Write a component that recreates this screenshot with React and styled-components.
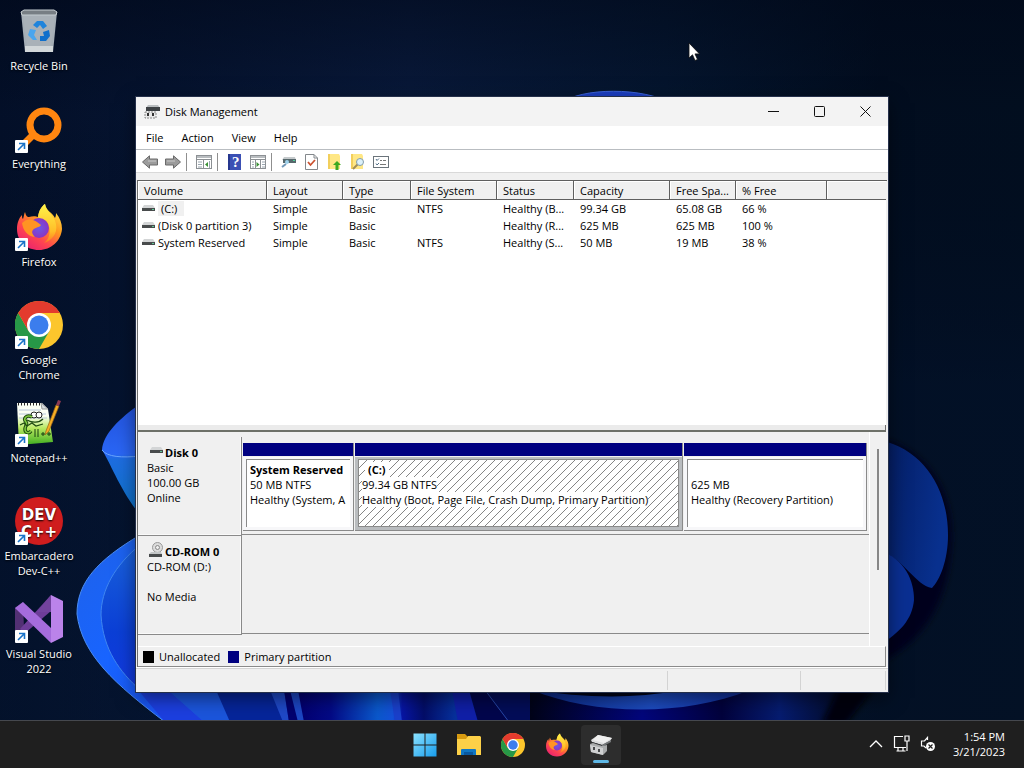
import styled, { createGlobalStyle } from "styled-components";

const GlobalStyle = createGlobalStyle`
    *, *::before, *::after {
        box-sizing: border-box;
    }

    body {
        margin: 0;
        font-family: "Open Sans", "Noto Sans", sans-serif;
        font-size: 11px;
        line-height: 15px;
        color: #000;
        background: #03102a;
    }

    button {
        margin: 0;
        padding: 0;
        border: 0;
        background: transparent;
        font: inherit;
        color: inherit;
    }
`

const Screen = styled.div`
    position: relative;
    display: flex;
    flex-direction: column;
    min-height: 100vh;
    overflow: hidden;
`

const Wallpaper = styled.svg`
    position: absolute;
    inset: 0;
    width: 100%;
    height: 100%;
`

const DesktopArea = styled.main`
    position: relative;
    flex: 1;
`

const Shortcuts = styled.nav`
    display: flex;
    flex-direction: column;
    width: 78px;
`

const Shortcut = styled.button`
    display: flex;
    flex-direction: column;
    align-items: center;
    gap: 3px;
    height: 98px;
    padding-top: 7px;
    color: #fff;
    text-shadow: 0 1px 2px #000;
`

const Pointer = styled.svg`
    position: absolute;
    left: 688px;
    top: 42px;
`

const Window = styled.section`
    position: absolute;
    left: 136px;
    right: 136px;
    top: 97px;
    background: #f0f0f0;
    box-shadow: 0 0 0 1px #25304a, 0 6px 18px rgba(0, 0, 0, 0.5);
`

const TitleBar = styled.header`
    display: flex;
    align-items: center;
    height: 29px;
    padding-left: 8px;
    background: #f3f3f3;
`

const Title = styled.h1`
    flex: 1;
    margin: 0 0 0 5px;
    font-size: 11px;
    font-weight: 400;
`

const CaptionButton = styled.button`
    display: flex;
    align-items: center;
    justify-content: center;
    width: 46px;
    height: 29px;
`

const MenuBar = styled.nav`
    display: flex;
    height: 24px;
    padding-left: 1px;
    background: #fff;
    border-bottom: 1px solid #b9bdc1;
`

const MenuItem = styled.button`
    padding: 0 9px;
`

const Toolbar = styled.div`
    display: flex;
    align-items: center;
    height: 23px;
    margin-bottom: 7px;
    padding: 2px 2px 0;
    background: #fff;
    border-bottom: 1px solid #d9d9d9;
`

const ToolButton = styled.button`
    display: flex;
    align-items: center;
    justify-content: center;
    width: 23px;
    height: 20px;
`

const ToolSeparator = styled.span`
    width: 8px;
    height: 18px;
    border-left: 1px solid #8f8f8f;
    margin-left: 2px;
    margin-right: -2px;
`

const Panes = styled.div`
    margin: 0 1px;
    border-left: 1px solid #6d6d6d;
    border-top: 1px solid #5f5f5f;
`

const VolumeList = styled.div`
    height: 244px;
    margin-right: 1px;
    background: #fff;
    overflow: hidden;
`

const VolumeTable = styled.table`
    width: 100%;
    table-layout: fixed;
    border-collapse: separate;
    border-spacing: 0;
`

const HeadCell = styled.th`
    height: 19px;
    padding: 0 0 0 6px;
    font-weight: 400;
    text-align: left;
    white-space: nowrap;
    overflow: hidden;
    background: #f0f0f0;
    border-bottom: 1px solid #5f5f5f;
    border-right: ${props => props.$last ? "0" : "1px solid #5f5f5f"};
    box-shadow: inset 1px 1px 0 #fff;
`

const Cell = styled.td`
    height: 17px;
    padding: 0 0 0 6px;
    white-space: nowrap;
    overflow: hidden;
`

const VolumeCell = styled(Cell)`
    padding-left: 4px;
`

const VolumeName = styled.span`
    display: flex;
    align-items: center;
    gap: 3px;
`

const VolumeText = styled.span`
    padding: ${props => props.$selected ? "0 7px 0 3px" : "0"};
    background: ${props => props.$selected ? "#f0f0f0" : "transparent"};
`

const Splitter = styled.div`
    height: 7px;
    margin-right: 1px;
    background: #ebebeb;
    border-right: 1px solid #6d6d6d;
    border-bottom: 2px solid #6d7068;
`

const DiskPane = styled.div`
    display: flex;
    min-height: 214px;
`

const DiskRows = styled.div`
    flex: 1;
    min-width: 0;
    padding-top: 5px;
    border-right: 1px solid #fff;
`

const ScrollTrack = styled.div`
    width: 17px;
    padding: 17px 8px 0 7px;
`

const ScrollThumb = styled.div`
    height: 121px;
    background: #868686;
`

const DiskRow = styled.div`
    display: flex;
    height: 99px;
`

const DiskLabel = styled.div`
    width: 104px;
    padding: 8px 0 0 9px;
    border-right: 1px solid #8a8a8a;
    border-bottom: 1px solid #8a8a8a;
    box-shadow: inset -1px -1px 0 #fafafa;
`

const DiskName = styled.div`
    display: flex;
    align-items: center;
    gap: 2px;
    height: 15px;
    font-weight: 700;
`

const DiskSymbol = styled.span`
    display: flex;
    align-items: center;
    justify-content: flex-end;
    width: 16px;
    height: 15px;
    padding-bottom: 3px;
`

const DiskLine = styled.div`
    height: 15px;
`

const Partitions = styled.div`
    display: grid;
    grid-template-columns: 111px 1fr 183px;
    gap: 1px;
    flex: 1;
    min-width: 0;
    margin-bottom: 1px;
    padding: 6px 2px 3px 1px;
    border-bottom: 1px solid #8a8a8a;
`

const Partition = styled.div`
    display: flex;
    flex-direction: column;
    min-width: 0;
    border-right: 1px solid #8a8a8a;
    border-bottom: 1px solid #8a8a8a;
`

const PartitionBar = styled.div`
    height: 13px;
    background: #000080;
    margin-bottom: 1px;
`

const PartitionFrame = styled.div`
    flex: 1;
    display: flex;
    min-width: 0;
    padding: 2px 3px 3px;
    background: ${props => props.$selected ? "#b9bcbf" : "#f7f7f9"};
`

const PartitionBody = styled.div`
    position: relative;
    flex: 1;
    min-width: 0;
    padding: 2px 3px;
    background: #fff;
    border-left: 1px solid #8a8a8a;
    border-top: 1px solid #8a8a8a;
    border-right: ${props => props.$selected ? "1px solid #8a8a8a" : "0"};
    border-bottom: ${props => props.$selected ? "1px solid #8a8a8a" : "0"};
`

const Hatch = styled.svg`
    position: absolute;
    inset: 0;
    width: 100%;
    height: 100%;
`

const PartitionLine = styled.div`
    position: relative;
    height: 15px;
    white-space: nowrap;
    overflow: hidden;
    font-weight: ${props => props.$bold ? 700 : 400};
    padding-left: ${props => props.$indent ? "3px" : "0"};

    span {
        background: #fff;
        padding: ${props => props.$indent ? "0 3px" : "0"};
    }
`

const Legend = styled.footer`
    display: flex;
    align-items: center;
    gap: 8px;
    height: 21px;
    margin-right: 1px;
    padding-left: 5px;
    border-top: 1px solid #fff;
    border-right: 1px solid #8a8a8a;
    border-bottom: 1px solid #8a8a8a;
`

const LegendItem = styled.span`
    display: flex;
    align-items: center;
    gap: 5px;
`

const Swatch = styled.span`
    width: 11px;
    height: 12px;
    background: ${props => props.$color};
`

const StatusBar = styled.div`
    display: flex;
    justify-content: flex-end;
    height: 25px;
    padding: 3px 2px 2px;
    border-top: 1px solid #fff;
    box-shadow: inset 0 1px 0 #d5d5d5;
`

const StatusCell = styled.div`
    width: ${props => props.$width};
    border-left: 1px solid #d3d3d3;
    border-right: ${props => props.$end ? "1px solid #d3d3d3" : "0"};
`

const Taskbar = styled.footer`
    position: relative;
    display: grid;
    grid-template-columns: 1fr auto 1fr;
    align-items: center;
    height: 48px;
    padding-left: 2px;
    background: #1f1f1f;
    border-top: 1px solid #45484e;
    color: #fff;
`

const TaskApps = styled.div`
    grid-column: 2;
    display: flex;
    gap: 4px;
`

const TaskButton = styled.button`
    display: flex;
    align-items: center;
    justify-content: center;
    position: relative;
    width: 40px;
    height: 40px;
    border-radius: 4px;
    background: ${props => props.$active ? "#2d2d2d" : "transparent"};

    &::after {
        content: "";
        position: absolute;
        left: 12px;
        bottom: 2px;
        width: 16px;
        height: 3px;
        border-radius: 2px;
        background: ${props => props.$active ? "#5fb8e6" : "transparent"};
    }
`

const Tray = styled.div`
    display: flex;
    align-items: center;
    justify-content: flex-end;
    gap: 10px;
    padding: 0 19px 2px 0;
`

const TrayButton = styled.button`
    display: flex;
    align-items: center;
`

const Clock = styled.time`
    margin-left: 7px;
    line-height: 15px;
    text-align: right;
`

function WallpaperArt() {
    return (
        <Wallpaper viewBox="0 0 1024 768" preserveAspectRatio="xMidYMid slice" aria-hidden="true">
            <defs>
                <filter id="soft" x="-20%" y="-20%" width="140%" height="140%">
                    <feGaussianBlur stdDeviation="3" />
                </filter>
                <linearGradient id="base" x1="0" x2="1" y1="0" y2="0">
                    <stop offset="0" stopColor="#03102a" />
                    <stop offset="0.4" stopColor="#0a1c40" />
                    <stop offset="0.65" stopColor="#051833" />
                    <stop offset="0.86" stopColor="#020e20" />
                    <stop offset="1" stopColor="#020f20" />
                </linearGradient>
                <linearGradient id="fade" x1="0" x2="0" y1="0" y2="1">
                    <stop offset="0" stopColor="#010818" stopOpacity="0.6" />
                    <stop offset="0.15" stopColor="#010818" stopOpacity="0.1" />
                    <stop offset="0.5" stopColor="#03122c" stopOpacity="0.5" />
                    <stop offset="1" stopColor="#04142c" stopOpacity="0.4" />
                </linearGradient>
                <linearGradient id="leafTop" x1="0" x2="0" y1="0" y2="1">
                    <stop offset="0" stopColor="#2353dd" />
                    <stop offset="0.45" stopColor="#2a66f5" />
                    <stop offset="0.5" stopColor="#1d6de0" />
                    <stop offset="1" stopColor="#0d74c8" />
                </linearGradient>
                <linearGradient id="leafOuter" x1="0" x2="1" y1="0" y2="1">
                    <stop offset="0" stopColor="#1f62e8" />
                    <stop offset="0.4" stopColor="#1864ff" />
                    <stop offset="1" stopColor="#1c3ee0" />
                </linearGradient>
                <linearGradient id="leafInner" x1="0" x2="0" y1="0" y2="1">
                    <stop offset="0" stopColor="#1a62dc" />
                    <stop offset="0.6" stopColor="#0b3fd6" />
                    <stop offset="1" stopColor="#1238e0" />
                </linearGradient>
                <linearGradient id="strip" gradientUnits="userSpaceOnUse" x1="300" x2="455" y1="0" y2="0">
                    <stop offset="0" stopColor="#020070" />
                    <stop offset="0.2" stopColor="#030a86" />
                    <stop offset="0.5" stopColor="#0a58cc" />
                    <stop offset="0.6" stopColor="#1450d8" />
                    <stop offset="0.66" stopColor="#0715a4" />
                    <stop offset="0.8" stopColor="#030d68" />
                    <stop offset="1" stopColor="#06309c" />
                </linearGradient>
                <linearGradient id="rightLeaf" x1="0" x2="1" y1="0" y2="0.3">
                    <stop offset="0" stopColor="#041c60" />
                    <stop offset="1" stopColor="#08308e" />
                </linearGradient>
                <linearGradient id="bowl" gradientUnits="userSpaceOnUse" x1="530" x2="800" y1="0" y2="0">
                    <stop offset="0" stopColor="#0a2680" />
                    <stop offset="0.45" stopColor="#1d4cc0" />
                    <stop offset="1" stopColor="#0a1c80" />
                </linearGradient>
                <linearGradient id="under" gradientUnits="userSpaceOnUse" x1="530" x2="850" y1="0" y2="0">
                    <stop offset="0" stopColor="#010318" />
                    <stop offset="0.35" stopColor="#02067c" />
                    <stop offset="0.6" stopColor="#02023c" />
                    <stop offset="0.78" stopColor="#061c70" />
                    <stop offset="1" stopColor="#02081c" />
                </linearGradient>
            </defs>
            <rect width="1024" height="768" fill="url(#base)" />
            <rect width="1024" height="768" fill="url(#fade)" />
            <path d="M560 104C580 87 645 87 672 104Z" fill="#1c3fc4" stroke="#3a62d8" />
            <path d="M140 404C120 418 103 434 102 450C110 462 120 490 140 515Z" fill="url(#leafTop)" />
            <path d="M102 450C107 457 122 458 140 456" fill="none" stroke="#69a5ff" />
            <path d="M140 535C98 560 77 582 77 614C82 655 115 684 165 722H300V535Z" fill="url(#leafOuter)" stroke="#4a8df5" />
            <path d="M140 545C115 565 101 590 101 615C103 650 120 672 140 690Z" fill="url(#leafInner)" stroke="#3f86f0" />
            <path d="M138 690L165 722H204L168 690Z" fill="#1c3fe0" />
            <path d="M168 690L204 722H232L216 690Z" fill="#1b55dc" />
            <path d="M216 690L230 722H290V690Z" fill="#06259a" />
            <path d="M270 690L283 722H289L284 690Z" fill="#1f49c8" />
            <path d="M284 690L289 722H520V690Z" fill="url(#strip)" />
            <path d="M290 690L298 722H304L298 690Z" fill="#1c46c4" />
            <path d="M390 690L395 722H402L398 690Z" fill="#1a40cc" />
            <path d="M452 690L458 722H478L469 690Z" fill="#101fa8" />
            <path d="M469 690L478 722H560V690Z" fill="#02064c" />
            <path d="M485 690L509 722H610L530 690Z" fill="#030d58" />
            <path d="M485 690L509 722" stroke="#2747a8" fill="none" />
            <path d="M530 690H850L830 722H530Z" fill="url(#under)" />
            <path d="M532 690C590 714 680 718 750 690Z" fill="url(#bowl)" />
            <path d="M532 690C580 697 630 700 680 690Z" fill="#010418" />
            <path d="M840 686L822 724H846L876 686Z" fill="#000208" filter="url(#soft)" />
            <path d="M870 436C935 448 956 500 951 550C946 610 920 645 870 668Z" fill="#01021c" filter="url(#soft)" />
            <path d="M880 440C925 450 948 490 948 535C948 560 940 580 932 588C915 585 905 560 880 550Z" fill="url(#rightLeaf)" />
            <path d="M880 550C905 560 914 580 914 600C912 620 900 632 880 645Z" fill="#0a2f92" />
        </Wallpaper>
    )
}

function ShortcutBadge() {
    return (
        <g>
            <rect x="0" y="35" width="13" height="13" rx="1" fill="#fff" />
            <path d="M3 45L9 39M4 38.500H9.500V44" fill="none" stroke="#1a73c8" strokeWidth="1.600" />
        </g>
    )
}

function RecycleIcon() {
    return (
        <svg width="48" height="48" viewBox="0 0 48 48">
            <path d="M6 5H42L38 45H10Z" fill="#a5aeb6" />
            <path d="M6 5L9 3H39L42 5L41 8H7Z" fill="#777e84" stroke="#c7ced2" />
            <path d="M8 9H40L36 39H12Z" fill="#a9b1b8" />
            <path d="M10 39H38L38 45H10Z" fill="#d2d7d9" />
            <path d="M18 18L22 14H28L32 19L28 22L25 18L22 21Z" fill="#1f84dc" />
            <path d="M15 22L21 23L19 28L22 33H18L13 28Z" fill="#49a5ee" />
            <path d="M34 23L35 29L31 34H25V29H29L28 25Z" fill="#0f6fcb" />
        </svg>
    )
}

function EverythingIcon() {
    return (
        <svg width="48" height="48" viewBox="0 0 48 48">
            <path d="M18 30L5 43" stroke="#ff8610" strokeWidth="7" />
            <circle cx="29" cy="20" r="14" fill="none" stroke="#ff8610" strokeWidth="7" />
            <ShortcutBadge />
        </svg>
    )
}

function FirefoxIcon({ size, badge }) {
    return (
        <svg width={size} height={size} viewBox="0 0 48 48">
            <defs>
                <linearGradient id="foxBody" x1="0.9" x2="0.2" y1="0" y2="1">
                    <stop offset="0" stopColor="#fff24a" />
                    <stop offset="0.4" stopColor="#ff9a1f" />
                    <stop offset="0.7" stopColor="#ff4550" />
                    <stop offset="1" stopColor="#e81f72" />
                </linearGradient>
                <linearGradient id="foxFlame" x1="0" x2="0" y1="0" y2="1">
                    <stop offset="0" stopColor="#fff44a" />
                    <stop offset="0.7" stopColor="#ffbd28" />
                    <stop offset="1" stopColor="#ff7a20" />
                </linearGradient>
                <radialGradient id="foxGlobe">
                    <stop offset="0" stopColor="#6c58e8" />
                    <stop offset="1" stopColor="#8a35c2" />
                </radialGradient>
            </defs>
            <path d="M10 9C11 13 12 14 14 14C17 13 21 13 23 14C24 7 27 3 30 1C31 8 37 9 40 15C41 13 41 11 41 10C45 15 47 20 47 26C46 38 36 47 24 47C11 47 2 38 2 26C2 20 4 15 7 12C7 14 7 15 8 16C9 13 9 11 10 9Z" fill="url(#foxBody)" />
            <path d="M30 1C31 9 39 11 41 21C43 31 36 38 29 40C36 35 36 25 32 19C29 16 24 16 23 14C24 7 27 3 30 1Z" fill="url(#foxFlame)" />
            <circle cx="24" cy="25" r="10" fill="url(#foxGlobe)" />
            <path d="M7 20C12 15 18 16 22 19L26 22C24 25 20 24 18 27C16 29 18 32 20 34C12 33 8 27 7 20Z" fill="#ff9423" />
            {badge && <ShortcutBadge />}
        </svg>
    )
}

function ChromeIcon({ size, badge }) {
    return (
        <svg width={size} height={size} viewBox="0 0 48 48">
            <circle cx="24" cy="24" r="24" fill="#fcc62c" />
            <path d="M3.200 12A24 24 0 0 0 24 48L34.400 30L24 24L13.600 30Z" fill="#279847" />
            <path d="M3.200 12A24 24 0 0 1 44.800 12H24L13.600 30Z" fill="#e33b2e" />
            <circle cx="24" cy="24" r="12" fill="#fff" />
            <circle cx="24" cy="24" r="9.500" fill="#3b7ded" />
            {badge && <ShortcutBadge />}
        </svg>
    )
}

function NotepadIcon() {
    return (
        <svg width="48" height="48" viewBox="0 0 48 48">
            <defs>
                <linearGradient id="notePage" x1="0" x2="0" y1="0" y2="1">
                    <stop offset="0.3" stopColor="#fbfff5" />
                    <stop offset="0.6" stopColor="#b8e860" />
                    <stop offset="1" stopColor="#3fae20" />
                </linearGradient>
            </defs>
            <path d="M2 4H27L33 10L38 43L4 46Z" fill="url(#notePage)" />
            <path d="M26 4L27 10H33Z" fill="#d8dde0" stroke="#999" />
            <path d="M3 5H26" stroke="#222" strokeWidth="3" strokeDasharray="1 2" />
            <path d="M4 11H26M4 15H31M4 19H32" stroke="#b9c8dc" />
            <circle cx="19" cy="16" r="3" fill="#fff" stroke="#222" />
            <circle cx="24" cy="16" r="3" fill="#fff" stroke="#222" />
            <path d="M17 18C11 15 8 20 11 23C13 25 10 27 10 30C10 34 14 35 16 32" fill="none" stroke="#1f4a10" strokeWidth="3.500" />
            <path d="M17 18C11 15 8 20 11 23C13 25 10 27 10 30C10 34 14 35 16 32" fill="none" stroke="#80cc40" strokeWidth="1.500" />
            <path d="M5 26L9 24L12 27L17 24L21 27L28 25M12 21C17 24 24 24 28 20" fill="none" stroke="#1f4a10" strokeWidth="1.300" />
            <path d="M20 30V38M23 30V38M26 35H30M28 33V37M32 35H36M34 33V37" stroke="#164010" />
            <path d="M31 32L41 6L44 7L34 32L30 36Z" fill="#f6ae24" stroke="#96601a" strokeWidth="0.700" />
            <path d="M41 6L43 1L46 2L44 7Z" fill="#8c3a52" />
            <ShortcutBadge />
        </svg>
    )
}

const LogoText = styled.text`
    font-family: "DejaVu Sans", sans-serif;
    font-weight: 700;
    font-size: 15px;
    fill: #fff;
`

function DevIcon() {
    return (
        <svg width="48" height="48" viewBox="0 0 48 48" aria-hidden="true">
            <circle cx="24" cy="24" r="24" fill="#cf1d1e" />
            <LogoText x="24" y="23" textAnchor="middle">DEV</LogoText>
            <LogoText x="24" y="40" textAnchor="middle">C++</LogoText>
            <ShortcutBadge />
        </svg>
    )
}

function VisualStudioIcon() {
    return (
        <svg width="48" height="48" viewBox="0 0 48 48">
            <path d="M0 13L8 7L9 34L0 36Z" fill="#523074" />
            <path d="M5 34L36 0V16L9 39Z" fill="#6d3d98" />
            <path d="M36 0L48 6V42L36 48Z" fill="#bb83ea" />
            <path d="M0 13L8 7L36 33V48Z" fill="#a56cdc" />
            <path d="M36 0V17L22 17Z" fill="#72439e" />
            <ShortcutBadge />
        </svg>
    )
}

function DriveIcon() {
    return (
        <svg width="13" height="8" viewBox="0 0 13 8" aria-hidden="true">
            <path d="M2 0H11L13 3H0Z" fill="#d3d5d6" />
            <rect y="3" width="13" height="3" fill="#484b4c" />
            <rect x="10" y="4" width="2" height="1" fill="#62c796" />
        </svg>
    )
}

function CdIcon() {
    return (
        <svg width="14" height="17" viewBox="0 0 14 17" aria-hidden="true">
            <circle cx="8.500" cy="5.500" r="5" fill="#dcdcdc" stroke="#999" />
            <circle cx="8.500" cy="5.500" r="2" fill="#eee" stroke="#888" />
            <path d="M2 10H12L13 12H0Z" fill="#c3c6c7" />
            <rect y="12" width="13" height="3" fill="#484b4c" />
        </svg>
    )
}

function AppIcon() {
    return (
        <svg width="16" height="16" viewBox="0 0 16 16">
            <path d="M4 1H14L16 4H2Z" fill="#b9bdbf" />
            <rect x="2" y="3" width="14" height="4" fill="#3e4245" />
            <path d="M1 8H12V14H1Z" fill="#e9e9e9" stroke="#888" strokeDasharray="2 1" />
            <path d="M3 9H5V12H3ZM8 9H10V12H8Z" fill="#333" />
        </svg>
    )
}

function ArrowIcon({ flip }) {
    return (
        <svg width="16" height="14" viewBox="0 0 16 14">
            <path d={flip ? "M15.500 7L8.500 0.800V4H0.500V10H8.500V13.200Z" : "M0.500 7L7.500 0.800V4H15.500V10H7.500V13.200Z"} fill="#9c9c9c" stroke="#6a6a6a" />
            <path d={flip ? "M2 6H10" : "M6 6H14"} stroke="#c9c9c9" />
        </svg>
    )
}

function PaneIcon({ right }) {
    return (
        <svg width="16" height="14" viewBox="0 0 16 14">
            <rect x="0.500" y="0.500" width="15" height="13" fill="#fff" stroke="#8c9094" />
            <rect x="1" y="1" width="14" height="2" fill="#b9bdc0" />
            <path d={right ? "M0 4.500H16M5.500 5V14M10.500 5V14" : "M0 4.500H16M7.500 5V14"} stroke="#8c9094" />
            <path d={right ? "M12 7H15M12 9.500H15M12 12H15M2 7H4M2 9.500H4M2 12H4" : "M2 7H6M2 9.500H6M2 12H6M13.500 6V13"} stroke="#9aa6b0" />
            <path d={right ? "M6.500 7V12L9.500 9.500Z" : "M12 7V12L9 9.500Z"} fill="#3a9136" />
        </svg>
    )
}

const HelpText = styled.text`
    font-family: "Liberation Serif", serif;
    font-weight: 700;
    font-size: 15px;
    fill: #fff;
`

function HelpIcon() {
    return (
        <svg width="14" height="16" viewBox="0 0 14 16" aria-hidden="true">
            <rect width="13" height="16" fill="#3b50b4" />
            <rect width="2" height="16" fill="#26378f" />
            <HelpText x="4" y="13">?</HelpText>
        </svg>
    )
}

function DiskSearchIcon() {
    return (
        <svg width="16" height="14" viewBox="0 0 16 14">
            <path d="M3 2H14L15 5H1Z" fill="#c5cacc" />
            <rect x="2" y="4" width="13" height="4" fill="#56686c" />
            <rect x="12" y="5" width="2" height="1" fill="#4fd09a" />
            <circle cx="6" cy="7" r="2" fill="#9fd2ec" />
            <path d="M5 9L1 12" stroke="#7198b8" strokeWidth="2" />
        </svg>
    )
}

function CheckPageIcon() {
    return (
        <svg width="13" height="16" viewBox="0 0 13 16">
            <path d="M0.500 0.500H9L12.500 4V15.500H0.500Z" fill="#fff" stroke="#83888c" />
            <path d="M9 0.500V4H12.500" fill="none" stroke="#83888c" />
            <path d="M3 8L5.500 11L10 6" fill="none" stroke="#cb5230" strokeWidth="1.800" />
        </svg>
    )
}

function FolderToolIcon({ search }) {
    return (
        <svg width="15" height="16" viewBox="0 0 15 16">
            <path d="M1 0H12L13 2V15H1Z" fill="#ffe785" />
            <path d="M1 0H3V15H1Z" fill="#f2cf5c" />
            {search
                ? <g><path d="M8 10L3 15" stroke="#a28d58" strokeWidth="2" /><circle cx="10" cy="8" r="3.500" fill="#dcf1fb" stroke="#849ca9" /></g>
                : <path d="M10 7L14 11H11.500V16H8.500V11H6Z" fill="#3daa20" />}
        </svg>
    )
}

function ListIcon() {
    return (
        <svg width="16" height="12" viewBox="0 0 16 12">
            <rect x="0.500" y="0.500" width="15" height="11" fill="#fff" stroke="#6b747b" />
            <path d="M3 3L4 4.500L6 2.500M3 7.500L4 9L6 7" fill="none" stroke="#526f88" />
            <path d="M7 4.500H9M10 4.500H13M7 8.500H13" stroke="#777" />
        </svg>
    )
}

function StartIcon() {
    return (
        <svg width="24" height="24" viewBox="0 0 24 24">
            <defs>
                <linearGradient id="start" x1="0" x2="1" y1="0" y2="1">
                    <stop offset="0" stopColor="#8be2ff" />
                    <stop offset="1" stopColor="#179cec" />
                </linearGradient>
            </defs>
            <path d="M0.500 0.500H11.500V11.500H0.500ZM12.500 0.500H23.500V11.500H12.500ZM0.500 12.500H11.500V23.500H0.500ZM12.500 12.500H23.500V23.500H12.500Z" fill="url(#start)" />
        </svg>
    )
}

function ExplorerIcon() {
    return (
        <svg width="26" height="24" viewBox="0 0 26 24">
            <path d="M1 1H9L12 4V10H1Z" fill="#d79a10" />
            <path d="M1 6H10L12 3H24L25 4V22H1Z" fill="#fcd048" />
            <path d="M5 22V17Q5 16 6 16H19Q20 16 20 17V22Z" fill="#1077c4" />
            <path d="M8 19H17V22H8Z" fill="#0a589e" />
        </svg>
    )
}

function DiskTaskIcon() {
    return (
        <svg width="24" height="24" viewBox="0 0 24 24">
            <path d="M2 7L9 2L23 5L21 8L13 12L3 9Z" fill="#dcddde" />
            <path d="M9 2L23 5L15 10L4 7Z" fill="#efefef" />
            <path d="M13 12L22 7V9L13 14Z" fill="#747779" />
            <path d="M3 9L13 12V14L3 11Z" fill="#333638" />
            <path d="M1 11L4 10L13 13L18 12V18L14 22L2 19Z" fill="#a9abac" />
            <path d="M1 12L14 15V22L2 19Z" fill="#cfd0d1" />
            <path d="M4 14H6V17H4ZM9 16H11V19H9Z" fill="#47494b" />
        </svg>
    )
}

const shortcuts = [
    { name: "Recycle Bin", lines: ["Recycle Bin"], icon: <RecycleIcon /> },
    { name: "Everything", lines: ["Everything"], icon: <EverythingIcon /> },
    { name: "Firefox", lines: ["Firefox"], icon: <FirefoxIcon size={48} badge /> },
    { name: "Chrome", lines: ["Google", "Chrome"], icon: <ChromeIcon size={48} badge /> },
    { name: "Notepad", lines: ["Notepad++"], icon: <NotepadIcon /> },
    { name: "Dev", lines: ["Embarcadero", "Dev-C++"], icon: <DevIcon /> },
    { name: "VS", lines: ["Visual Studio", "2022"], icon: <VisualStudioIcon /> },
]

const columns = [
    { label: "Volume", width: 129 },
    { label: "Layout", width: 76 },
    { label: "Type", width: 68 },
    { label: "File System", width: 86 },
    { label: "Status", width: 77 },
    { label: "Capacity", width: 96 },
    { label: "Free Spa...", width: 66 },
    { label: "% Free", width: 91 },
    { label: "" },
]

const volumes = [
    ["(C:)", "Simple", "Basic", "NTFS", "Healthy (B...", "99.34 GB", "65.08 GB", "66 %"],
    ["(Disk 0 partition 3)", "Simple", "Basic", "", "Healthy (R...", "625 MB", "625 MB", "100 %"],
    ["System Reserved", "Simple", "Basic", "NTFS", "Healthy (S...", "50 MB", "19 MB", "38 %"],
]

const partitions = [
    { name: "System Reserved", size: "50 MB NTFS", state: "Healthy (System, A" },
    { name: "(C:)", size: "99.34 GB NTFS", state: "Healthy (Boot, Page File, Crash Dump, Primary Partition)", selected: true },
    { name: "", size: "625 MB", state: "Healthy (Recovery Partition)" },
]

function Volumes() {
    return (
        <VolumeList>
            <VolumeTable>
                <colgroup>
                    {columns.map(col => <col key={col.label} width={col.width} />)}
                </colgroup>
                <thead>
                    <tr>
                        {columns.map(col => <HeadCell key={col.label} $last={!col.label}>{col.label}</HeadCell>)}
                    </tr>
                </thead>
                <tbody>
                    {volumes.map(([name, ...values], row) => (
                        <tr key={name}>
                            <VolumeCell>
                                <VolumeName>
                                    <DriveIcon />
                                    <VolumeText $selected={row === 0}>{name}</VolumeText>
                                </VolumeName>
                            </VolumeCell>
                            {values.map((value, i) => <Cell key={i}>{value}</Cell>)}
                            <Cell />
                        </tr>
                    ))}
                </tbody>
            </VolumeTable>
        </VolumeList>
    )
}

function Disks() {
    return (
        <DiskPane>
            <DiskRows>
                <DiskRow>
                    <DiskLabel>
                        <DiskName><DiskSymbol><DriveIcon /></DiskSymbol>Disk 0</DiskName>
                        <DiskLine>Basic</DiskLine>
                        <DiskLine>100.00 GB</DiskLine>
                        <DiskLine>Online</DiskLine>
                    </DiskLabel>
                    <Partitions>
                        {partitions.map(part => (
                            <Partition key={part.size}>
                                <PartitionBar />
                                <PartitionFrame $selected={part.selected}>
                                    <PartitionBody $selected={part.selected}>
                                        {part.selected && (
                                            <Hatch aria-hidden="true">
                                                <defs>
                                                    <pattern id="hatch" width="8" height="8" patternUnits="userSpaceOnUse">
                                                        <path d="M0 8L8 0" stroke="#858585" shapeRendering="crispEdges" />
                                                    </pattern>
                                                </defs>
                                                <rect width="100%" height="100%" fill="url(#hatch)" />
                                            </Hatch>
                                        )}
                                        <PartitionLine $bold $indent={part.selected}><span>{part.name}</span></PartitionLine>
                                        <PartitionLine><span>{part.size}</span></PartitionLine>
                                        <PartitionLine><span>{part.state}</span></PartitionLine>
                                    </PartitionBody>
                                </PartitionFrame>
                            </Partition>
                        ))}
                    </Partitions>
                </DiskRow>
                <DiskRow>
                    <DiskLabel>
                        <DiskName><DiskSymbol><CdIcon /></DiskSymbol>CD-ROM 0</DiskName>
                        <DiskLine>CD-ROM (D:)</DiskLine>
                        <DiskLine />
                        <DiskLine>No Media</DiskLine>
                    </DiskLabel>
                    <Partitions />
                </DiskRow>
            </DiskRows>
            <ScrollTrack><ScrollThumb /></ScrollTrack>
        </DiskPane>
    )
}

function DiskManagement() {
    return (
        <Window>
            <TitleBar>
                <AppIcon />
                <Title>Disk Management</Title>
                <CaptionButton aria-label="Minimize">
                    <svg width="11" height="11"><path d="M0 5.500H11" stroke="#111" /></svg>
                </CaptionButton>
                <CaptionButton aria-label="Maximize">
                    <svg width="11" height="11"><rect x="0.500" y="0.500" width="10" height="10" rx="1" fill="none" stroke="#111" /></svg>
                </CaptionButton>
                <CaptionButton aria-label="Close">
                    <svg width="11" height="11"><path d="M0.500 0.500L10.500 10.500M10.500 0.500L0.500 10.500" stroke="#111" /></svg>
                </CaptionButton>
            </TitleBar>
            <MenuBar>
                {["File", "Action", "View", "Help"].map(item => <MenuItem key={item}>{item}</MenuItem>)}
            </MenuBar>
            <Toolbar>
                <ToolButton aria-label="Back"><ArrowIcon /></ToolButton>
                <ToolButton aria-label="Forward"><ArrowIcon flip /></ToolButton>
                <ToolSeparator />
                <ToolButton aria-label="Console tree"><PaneIcon /></ToolButton>
                <ToolSeparator />
                <ToolButton aria-label="Help"><HelpIcon /></ToolButton>
                <ToolButton aria-label="Action pane"><PaneIcon right /></ToolButton>
                <ToolSeparator />
                <ToolButton aria-label="Rescan"><DiskSearchIcon /></ToolButton>
                <ToolButton aria-label="Properties"><CheckPageIcon /></ToolButton>
                <ToolButton aria-label="Open"><FolderToolIcon /></ToolButton>
                <ToolButton aria-label="Explore"><FolderToolIcon search /></ToolButton>
                <ToolButton aria-label="Settings"><ListIcon /></ToolButton>
            </Toolbar>
            <Panes>
                <Volumes />
                <Splitter />
                <Disks />
                <Legend>
                    <LegendItem><Swatch $color="#000" />Unallocated</LegendItem>
                    <LegendItem><Swatch $color="#000080" />Primary partition</LegendItem>
                </Legend>
            </Panes>
            <StatusBar>
                <StatusCell $width="133px" />
                <StatusCell $width="86px" $end />
            </StatusBar>
        </Window>
    )
}

function App() {
    return (
        <Screen>
            <GlobalStyle />
            <WallpaperArt />
            <DesktopArea>
                <Shortcuts>
                    {shortcuts.map(item => (
                        <Shortcut key={item.name}>
                            {item.icon}
                            <span>{item.lines.map(line => <div key={line}>{line}</div>)}</span>
                        </Shortcut>
                    ))}
                </Shortcuts>
                <DiskManagement />
                <Pointer width="13" height="20" viewBox="0 0 13 20" aria-hidden="true">
                    <path d="M1 1V16L4.500 12.800L7 18.500L9.500 17.400L7 11.900H11.500Z" fill="#fff" stroke="#111" strokeWidth="0.800" />
                </Pointer>
            </DesktopArea>
            <Taskbar>
                <TaskApps>
                    <TaskButton aria-label="Start"><StartIcon /></TaskButton>
                    <TaskButton aria-label="File Explorer"><ExplorerIcon /></TaskButton>
                    <TaskButton aria-label="Chrome"><ChromeIcon size={24} /></TaskButton>
                    <TaskButton aria-label="Firefox"><FirefoxIcon size={24} /></TaskButton>
                    <TaskButton aria-label="Disk Management" $active><DiskTaskIcon /></TaskButton>
                </TaskApps>
                <Tray>
                    <TrayButton aria-label="Hidden icons">
                        <svg width="14" height="8"><path d="M1 7L7 1L13 7" fill="none" stroke="#fff" strokeWidth="1.300" /></svg>
                    </TrayButton>
                    <TrayButton aria-label="Network">
                        <svg width="17" height="17" fill="none" stroke="#fff" strokeWidth="1.200">
                            <path d="M10 1.500H1.500V12.500H13M5 13V16M10 13V16M3.500 16H12.500" />
                            <path d="M12 1H16V6H12ZM14 6V16" />
                        </svg>
                    </TrayButton>
                    <TrayButton aria-label="Volume muted">
                        <svg width="16" height="16">
                            <path d="M7.500 4V1.500L4.500 5H1.500V10H4L6 12" fill="none" stroke="#fff" strokeWidth="1.200" />
                            <circle cx="10.500" cy="10.500" r="4.500" fill="#fff" />
                            <path d="M8.500 8.500L12.500 12.500M12.500 8.500L8.500 12.500" stroke="#1f1f1f" strokeWidth="1.200" />
                        </svg>
                    </TrayButton>
                    <Clock>1:54 PM<br />3/21/2023</Clock>
                </Tray>
            </Taskbar>
        </Screen>
    )
}

export default App;
